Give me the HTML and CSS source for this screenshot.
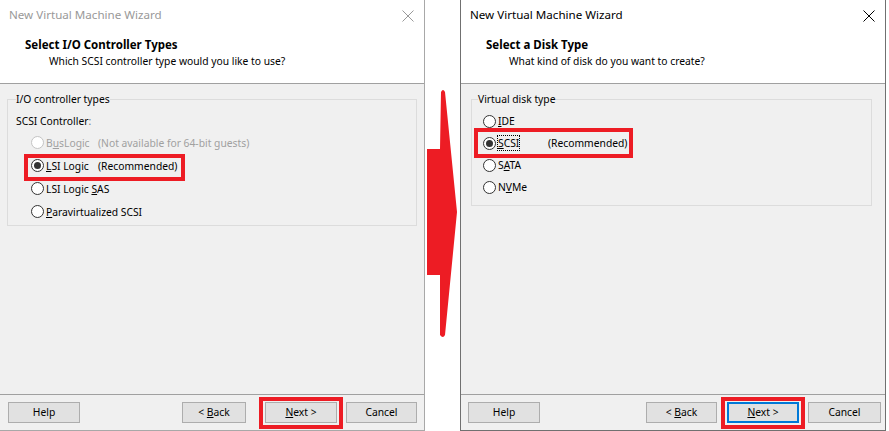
FILE: index.html
```html
<!DOCTYPE html>
<html>
<head>
<meta charset="utf-8">
<link rel="stylesheet" href="styles.css">
</head>
<body>
<div class="page">
  <section class="dlg dlg-left inactive">
    <header class="dlg-head">
      <div class="titlebar">
        <span class="title">New Virtual Machine Wizard</span>
        <svg class="close" width="12" height="12" viewBox="0 0 12 12"><path d="M0.5 0.5 L11.5 11.5 M11.5 0.5 L0.5 11.5" stroke="currentColor" stroke-width="1" fill="none"/></svg>
      </div>
      <div class="heading">Select I/O Controller Types</div>
      <div class="sub">Which SCSI controller type would you like to use?</div>
    </header>
    <main class="dlg-body">
      <fieldset class="group group-left">
        <legend>I/O controller types</legend>
        <div class="label">SCSI Controller<span class="colon">:</span></div>
        <div class="radio disabled"><span class="rb"></span><span class="name">B<u>u</u>sLogic</span><span class="note">(Not available for 64-bit guests)</span></div>
        <div class="radio marked"><span class="rb on"></span><span class="name"><u>L</u>SI Logic</span><span class="note">(Recommended)</span><span class="frame"></span></div>
        <div class="radio"><span class="rb"></span><span class="name">LSI Logic <u>S</u>AS</span></div>
        <div class="radio"><span class="rb"></span><span class="name"><u>P</u>aravirtualized SCSI</span></div>
      </fieldset>
    </main>
    <footer class="dlg-foot">
      <button class="btn w72">Help</button>
      <button class="btn w64 push">&lt; <u>B</u>ack</button>
      <button class="btn w72 gap19 marked">
        <u>N</u>ext &gt;<span class="frame"></span>
      </button>
      <button class="btn w71 gap9">Cancel</button>
    </footer>
  </section>

  <section class="dlg dlg-right">
    <header class="dlg-head">
      <div class="titlebar">
        <span class="title">New Virtual Machine Wizard</span>
        <svg class="close" width="12" height="12" viewBox="0 0 12 12"><path d="M0.5 0.5 L11.5 11.5 M11.5 0.5 L0.5 11.5" stroke="currentColor" stroke-width="1" fill="none"/></svg>
      </div>
      <div class="heading">Select a Disk Type</div>
      <div class="sub">What kind of disk do you want to create?</div>
    </header>
    <main class="dlg-body">
      <fieldset class="group group-right">
        <legend>Virtual disk type</legend>
        <div class="radio"><span class="rb"></span><span class="name"><u>I</u>DE</span></div>
        <div class="radio marked"><span class="rb on"></span><span class="name"><span class="focus"><u>S</u>CSI</span></span><span class="note">(Recommended)</span><span class="frame"></span></div>
        <div class="radio"><span class="rb"></span><span class="name">S<u>A</u>TA</span></div>
        <div class="radio"><span class="rb"></span><span class="name">N<u>V</u>Me</span></div>
      </fieldset>
    </main>
    <footer class="dlg-foot">
      <button class="btn w72">Help</button>
      <button class="btn w71 push">&lt; <u>B</u>ack</button>
      <button class="btn w72 gap10 default marked">
        <u>N</u>ext &gt;<span class="frame"></span>
      </button>
      <button class="btn w73 gap9">Cancel</button>
    </footer>
  </section>

  <svg class="arrow" width="40" height="260" viewBox="0 0 40 260">
    <path d="M14 4 Q16 0 18 4 L30 124 L18 247 Q16 251 13 247 L13 187 L0 187 L0 61 L13 61 Z" fill="#ed1c24"/>
  </svg>
</div>
</body>
</html>
```

FILE: styles.css
```css
* { box-sizing: border-box; }
html, body { margin: 0; padding: 0; background: #fff; }
body {
  font-family: "Noto Sans", "Segoe UI", "Liberation Sans", sans-serif;
  font-size: 10.3px;
  color: #000;
  width: 889px;
  height: 431px;
  overflow: hidden;
}
.page {
  position: relative;
  display: flex;
  gap: 35px;
  width: 889px;
  height: 431px;
}
.dlg {
  width: 426px;
  height: 431px;
  display: flex;
  flex-direction: column;
  border-left: 1px solid #707070;
  border-right: 1px solid #707070;
  border-bottom: 1px solid #707070;
  background: #f0f0f0;
}
.dlg-left {
  margin-left: -1px;
  border-color: #a8a8a8;
}
.dlg-head {
  height: 84px;
  background: #fff;
  border-bottom: 1px solid #a0a0a0;
  flex: none;
}
.titlebar {
  height: 30px;
  display: flex;
  align-items: center;
  padding-left: 9px;
  padding-right: 10px;
}
.title { flex: 1; line-height: 30px; font-size: 11.6px; }
.close { color: #000; margin-top: 1px; }
.inactive .title, .inactive .close { color: #999; }
.heading {
  margin-top: 7px;
  padding-left: 25px;
  line-height: 16px;
  font-weight: bold;
  font-size: 11.5px;
}
.sub {
  padding-left: 49px;
  line-height: 16px;
}
.dlg-right .sub { padding-left: 48px; }

.dlg-body {
  flex: 1;
  padding: 7px 7px 0 7px;
}
.dlg-right .dlg-body { padding: 7px 13px 0 10px; }

.group {
  margin: 0;
  border: 1px solid #dcdcdc;
  padding: 0 8px 2px 8px;
  min-width: 0;
}
.group legend {
  padding: 0;
  line-height: 16px;
}
.group-right { padding: 0 11px 7px 11px; }
.group-right legend { margin-left: -5px; }

.label { margin-top: 4px; line-height: 20px; }
.colon { color: #777; }

.radio {
  position: relative;
  display: flex;
  align-items: center;
  height: 23px;
  margin-left: 15px;
}
.group-right .radio { height: 22px; margin-left: 0; }
.group-right .radio:first-of-type { margin-top: 3px; }

.rb {
  width: 13px;
  height: 13px;
  border: 1px solid #333;
  border-radius: 50%;
  background: #fff;
  position: relative;
  flex: none;
  margin-right: 2px;
}
.rb.on::after {
  content: "";
  position: absolute;
  left: 2px; top: 2px;
  width: 7px; height: 7px;
  border-radius: 50%;
  background: #333;
}
.disabled { color: #a0a0a0; }
.disabled .rb { border-color: #c4c4c4; }

.name { width: 52px; white-space: nowrap; }
.group-right .name { width: 50px; }
.focus { outline: 1px dotted #000; outline-offset: 0; }
.note { white-space: nowrap; }

.frame {
  position: absolute;
  border: 4px solid #ed1c24;
  pointer-events: none;
}
.group-left .radio .frame { left: -7px; top: 0; width: 161px; bottom: -4px; }
.group-right .radio .frame { left: -9px; top: -4px; width: 159px; bottom: -4px; }

.dlg-foot {
  flex: none;
  height: 36px;
  border-top: 1px solid #a0a0a0;
  display: flex;
  align-items: flex-start;
  padding: 7px 0 0 8px;
}
.dlg-right .dlg-foot { padding-left: 7px; }
.btn {
  position: relative;
  height: 21px;
  border: 1px solid #adadad;
  background: #e1e1e1;
  font: inherit;
  color: #000;
  padding: 0;
  margin: 0;
  line-height: 19px;
}
.btn.default { border-color: #0078d7; box-shadow: inset 0 0 0 1px #0078d7; }
.w64 { width: 64px; }
.w71 { width: 71px; }
.w72 { width: 72px; }
.w73 { width: 73px; }
.push { margin-left: auto; }
.gap19 { margin-left: 19px; }
.gap10 { margin-left: 10px; }
.gap9 { margin-left: 9px; margin-right: 7px; }
.dlg-right .gap9 { margin-right: 4px; }
.btn .frame { left: -7px; right: -7px; top: -6px; bottom: -7px; }

.arrow {
  position: absolute;
  left: 427px;
  top: 88px;
}
```
